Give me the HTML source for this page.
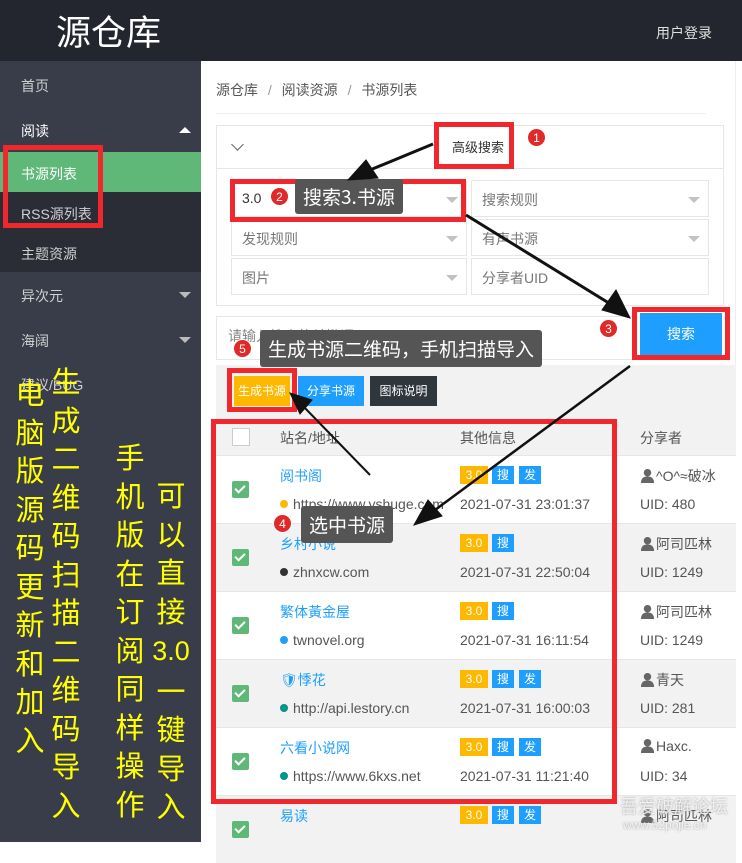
<!DOCTYPE html>
<html><head><meta charset="utf-8"><style>
*{box-sizing:border-box;margin:0;padding:0}
body{width:742px;height:842px;overflow:hidden;position:relative;background:#fff;font-family:"Liberation Sans","Noto Sans CJK SC",sans-serif;font-size:14px;color:#333}
.a{position:absolute}
.top{left:0;top:0;width:742px;height:61px;background:#23262e}
.side{left:0;top:61px;width:201px;height:781px;background:#393d49}
.si{position:absolute;left:21px;color:#d0d0d0;font-size:14px}
.tri-d{position:absolute;width:0;height:0;border-left:6px solid transparent;border-right:6px solid transparent;border-top:6px solid #bbb}
.tri-u{position:absolute;width:0;height:0;border-left:6px solid transparent;border-right:6px solid transparent;border-bottom:6px solid #fff}
.yl{position:absolute;color:#ffff00;font-size:29px;line-height:38.5px;width:34px;text-align:center;font-family:"Noto Sans CJK SC",sans-serif}
.sel{position:absolute;border:1px solid #e6e6e6;height:37px;color:#777;font-size:14px;padding:9px 10px;background:#fff}
.sel i{position:absolute;right:8px;top:16px;border-left:6px solid transparent;border-right:6px solid transparent;border-top:6px solid #c2c2c2}
.rb{position:absolute;border:5px solid #f0272d}
.circ{position:absolute;width:19px;height:19px;border-radius:50%;background:#e02a2a;color:#fff;font-size:12px;text-align:center;line-height:19px;border:1px solid #fff}
.tip{position:absolute;background:#555;color:#fff;font-size:19px;padding:0 8px;border-radius:3px;font-family:"Noto Sans CJK SC",sans-serif}
.row{position:absolute;left:216px;width:520px;height:68px;border-top:1px solid #e6e6e6}
.cb{position:absolute;left:16px;top:25px;width:17px;height:17px;background:#5fb878;border-radius:2px}
.cb:after{content:"";position:absolute;left:5px;top:2px;width:4px;height:8px;border-right:2px solid #fff;border-bottom:2px solid #fff;transform:rotate(45deg)}
.nm{position:absolute;left:64px;top:10px;color:#1e9fff;font-size:14px}
.url{position:absolute;left:64px;top:40px;color:#555;font-size:14px;white-space:nowrap}
.url b{display:inline-block;width:8px;height:8px;border-radius:50%;margin-right:5px;vertical-align:1px}
.tg{position:absolute;top:10px;height:18px;line-height:18px;font-size:12px;color:#fff;text-align:center}
.t3{left:244px;width:28px;background:#ffb800}
.ts{left:276px;width:22px;background:#1e9fff}
.tf{left:303px;width:22px;background:#1e9fff}
.dt{position:absolute;left:244px;top:40px;color:#555;font-size:14px}
.us{position:absolute;left:424px;top:10px;color:#555;font-size:14px;white-space:nowrap}
.us svg{vertical-align:-2px;margin-right:1px}
.uid{position:absolute;left:424px;top:40px;color:#555;font-size:14px}
</style></head><body>
<svg width="0" height="0" style="position:absolute"><defs><symbol id="u" viewBox="0 0 16 16"><circle cx="8" cy="5" r="4" fill="#666"/><path d="M1 16 Q1 9 8 9 Q15 9 15 16Z" fill="#666"/></symbol></defs></svg>
<div class="a top"></div>
<div class="a" style="left:56px;top:8px;color:#fff;font-size:35px;font-family:'Noto Sans CJK SC',sans-serif;line-height:46px">源仓库</div>
<div class="a" style="left:656px;top:23px;color:#e0e0e0;font-size:14px">用户登录</div>
<div class="a side"></div>
<div class="a" style="left:0;top:192px;width:201px;height:80px;background:#2a2d35"></div>
<div class="a" style="left:0;top:152px;width:201px;height:40px;background:#5fb878"></div>
<div class="si" style="top:76px">首页</div>
<div class="si" style="top:121px;color:#fff">阅读</div><div class="tri-u" style="left:179px;top:127px"></div>
<div class="si" style="top:164px;color:#fff">书源列表</div>
<div class="si" style="top:204px">RSS源列表</div>
<div class="si" style="top:244px">主题资源</div>
<div class="si" style="top:286px">异次元</div><div class="tri-d" style="left:179px;top:292px"></div>
<div class="si" style="top:331px">海阔</div><div class="tri-d" style="left:179px;top:337px"></div>
<div class="si" style="top:375px">建议/BUG</div>
<div class="rb" style="left:3px;top:145px;width:100px;height:83px"></div>

<div class="yl" style="left:13px;top:373px">电<br>脑<br>版<br>源<br>码<br>更<br>新<br>和<br>加<br>入</div>
<div class="yl" style="left:49px;top:361px">生<br>成<br>二<br>维<br>码<br>扫<br>描<br>二<br>维<br>码<br>导<br>入</div>
<div class="yl" style="left:113px;top:437px">手<br>机<br>版<br>在<br>订<br>阅<br>同<br>样<br>操<br>作</div>
<div class="yl" style="left:150px;top:475px;width:42px">可<br>以<br>直<br>接<br><span style="font-family:'Liberation Sans',sans-serif;font-size:27px">3.0</span><br>一<br>键<br>导<br>入</div>

<div class="a" style="left:216px;top:80px;color:#555;font-size:14px">源仓库 <span style="color:#999;margin:0 6px">/</span> 阅读资源 <span style="color:#999;margin:0 6px">/</span> 书源列表</div>
<div class="a" style="left:216px;top:113px;width:490px;height:1px;background:#eee"></div>
<div class="a" style="left:735px;top:61px;width:1px;height:781px;background:#eee"></div>
<div class="a" style="left:216px;top:125px;width:508px;height:181px;border:1px solid #e6e6e6"></div>
<div class="a" style="left:216px;top:168px;width:508px;height:1px;background:#e6e6e6"></div>
<div class="a" style="left:233px;top:140px;width:9px;height:9px;border-right:1.5px solid #666;border-bottom:1.5px solid #666;transform:rotate(45deg)"></div>
<div class="a" style="left:452px;top:137px;font-size:13px;color:#333">高级搜索</div>
<div class="sel" style="left:231px;top:180px;width:236px;color:#333">3.0<i></i></div>
<div class="sel" style="left:471px;top:180px;width:238px">搜索规则<i></i></div>
<div class="sel" style="left:231px;top:219px;width:236px">发现规则<i></i></div>
<div class="sel" style="left:471px;top:219px;width:238px">有声书源<i></i></div>
<div class="sel" style="left:231px;top:258px;width:236px">图片<i></i></div>
<div class="sel" style="left:471px;top:258px;width:238px">分享者UID</div>
<div class="a" style="left:216px;top:316px;width:420px;height:44px;border:1px solid #e6e6e6;border-right:none"></div>
<div class="a" style="left:228px;top:326px;color:#888;font-size:14px">请输入搜索的关键词</div>
<div class="a" style="left:640px;top:313px;width:82px;height:42px;background:#1e9fff;color:#fff;text-align:center;line-height:42px;font-size:14px">搜索</div>
<div class="rb" style="left:632px;top:307px;width:98px;height:53px"></div>
<div class="a" style="left:216px;top:365px;width:520px;height:53px;background:#f2f2f2"></div>
<div class="a" style="left:234px;top:376px;width:56px;height:30px;background:#ffb800;color:#fff;font-size:12px;text-align:center;line-height:30px">生成书源</div>
<div class="a" style="left:298px;top:376px;width:66px;height:30px;background:#1e9fff;color:#fff;font-size:12px;text-align:center;line-height:30px">分享书源</div>
<div class="a" style="left:370px;top:376px;width:67px;height:30px;background:#2f363c;color:#fff;font-size:12px;text-align:center;line-height:30px">图标说明</div>
<div class="rb" style="left:227px;top:368px;width:70px;height:44px"></div>

<div class="row" style="top:418px;height:38px;background:#f2f2f2;border:none">
<div style="position:absolute;left:16px;top:10px;width:18px;height:18px;border:1px solid #ccc;background:#fff"></div>
<div style="position:absolute;left:64px;top:10px;color:#555">站名/地址</div>
<div style="position:absolute;left:244px;top:10px;color:#555">其他信息</div>
<div style="position:absolute;left:424px;top:10px;color:#555">分享者</div></div>
<div class="row" style="top:455px;background:#fff"><div class="cb"></div><div class="nm">阅书阁</div><div class="url"><b style="background:#ffb800"></b>https://www.yshuge.com</div><div class="tg t3">3.0</div><div class="tg ts">搜</div><div class="tg tf">发</div><div class="dt">2021-07-31 23:01:37</div><div class="us"><svg width="15" height="15"><use href="#u"/></svg>^O^≈破冰</div><div class="uid">UID: 480</div></div>
<div class="row" style="top:523px;background:#f2f2f2"><div class="cb"></div><div class="nm">乡村小说</div><div class="url"><b style="background:#333"></b>zhnxcw.com</div><div class="tg t3">3.0</div><div class="tg ts">搜</div><div class="dt">2021-07-31 22:50:04</div><div class="us"><svg width="15" height="15"><use href="#u"/></svg>阿司匹林</div><div class="uid">UID: 1249</div></div>
<div class="row" style="top:591px;background:#fff"><div class="cb"></div><div class="nm">繁体黃金屋</div><div class="url"><b style="background:#1e9fff"></b>twnovel.org</div><div class="tg t3">3.0</div><div class="tg ts">搜</div><div class="dt">2021-07-31 16:11:54</div><div class="us"><svg width="15" height="15"><use href="#u"/></svg>阿司匹林</div><div class="uid">UID: 1249</div></div>
<div class="row" style="top:659px;background:#f2f2f2"><div class="cb"></div><div class="nm">🛡悸花</div><div class="url"><b style="background:#009688"></b>http://api.lestory.cn</div><div class="tg t3">3.0</div><div class="tg ts">搜</div><div class="tg tf">发</div><div class="dt">2021-07-31 16:00:03</div><div class="us"><svg width="15" height="15"><use href="#u"/></svg>青天</div><div class="uid">UID: 281</div></div>
<div class="row" style="top:727px;background:#fff"><div class="cb"></div><div class="nm">六看小说网</div><div class="url"><b style="background:#009688"></b>https://www.6kxs.net</div><div class="tg t3">3.0</div><div class="tg ts">搜</div><div class="tg tf">发</div><div class="dt">2021-07-31 11:21:40</div><div class="us"><svg width="15" height="15"><use href="#u"/></svg>Haxc.</div><div class="uid">UID: 34</div></div>
<div class="row" style="top:795px;background:#f2f2f2"><div class="cb"></div><div class="nm">易读</div><div class="tg t3">3.0</div><div class="tg ts">搜</div><div class="tg tf">发</div><div class="us"><svg width="15" height="15"><use href="#u"/></svg>阿司匹林</div></div>
<div class="rb" style="left:211px;top:419px;width:406px;height:385px"></div>
<div class="a" style="left:620px;top:793px;color:rgba(255,255,255,.75);font-size:18px;text-shadow:0 0 2px #999">吾爱破解论坛</div>
<div class="a" style="left:623px;top:818px;color:rgba(255,255,255,.75);font-size:12px;text-shadow:0 0 2px #999">www.52pojie.cn</div>

<div class="rb" style="left:434px;top:122px;width:80px;height:47px"></div>
<div class="rb" style="left:230px;top:179px;width:236px;height:43px"></div>
<div class="tip" style="left:295px;top:179px;height:35px;line-height:35px">搜索3.书源</div>
<div class="tip" style="left:260px;top:330px;height:37px;line-height:37px">生成书源二维码，手机扫描导入</div>
<div class="tip" style="left:301px;top:506px;height:37px;line-height:37px">选中书源</div>
<svg class="a" style="left:0;top:0" width="742" height="842">
<g fill="#111" stroke="#111">
<line x1="433" y1="144" x2="370" y2="170" stroke-width="3"/><polygon points="348,180 366,160 378,178"/>
<line x1="466" y1="215" x2="612" y2="305" stroke-width="3"/><polygon points="630,318 602,310 616,290"/>
<line x1="630" y1="366" x2="435" y2="510" stroke-width="2.5"/><polygon points="414,525 428,500 442,516"/>
<line x1="370" y1="475" x2="302" y2="405" stroke-width="2"/><polygon points="290,393 312,400 300,414"/>
</g></svg>
<div class="circ" style="left:527px;top:128px">1</div>
<div class="circ" style="left:270px;top:187px">2</div>
<div class="circ" style="left:599px;top:319px">3</div>
<div class="circ" style="left:273px;top:514px">4</div>
<div class="circ" style="left:233px;top:339px">5</div>
</body></html>
